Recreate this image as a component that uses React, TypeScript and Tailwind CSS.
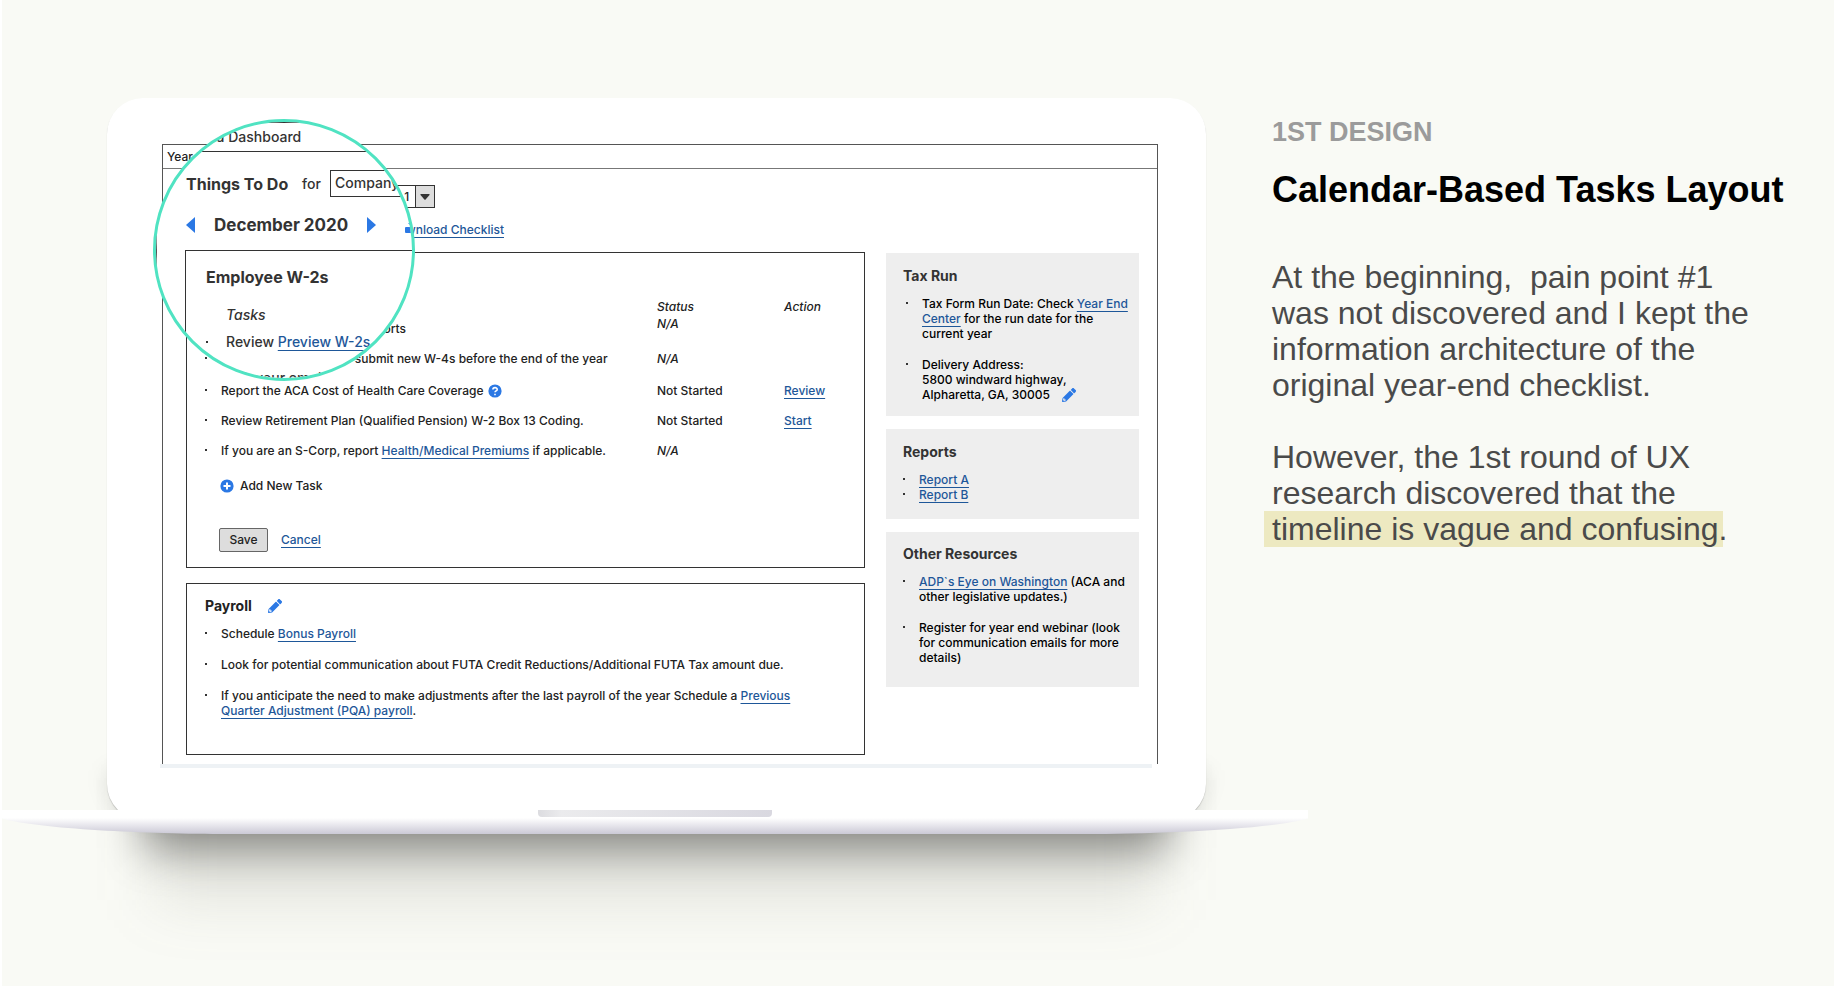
import React from 'react';

const link = 'text-[#1e5799] underline underline-offset-[3px]';

function Bullet() {
  return <span aria-hidden="true" className="mt-[6px] mr-[14px] h-[2px] w-[2px] shrink-0 bg-[#333]" />;
}

function Item({ children }: { children: React.ReactNode }) {
  return (
    <li className="flex">
      <Bullet />
      <div>{children}</div>
    </li>
  );
}

function Pencil() {
  return (
    <svg viewBox="0 0 512 512" className="h-[14px] w-[14px]" fill="#2b78e4" aria-hidden="true">
      <path d="M498 142l-46 46c-5 5-13 5-17 0L324 77c-5-5-5-12 0-17l46-46c19-19 49-19 68 0l60 60c19 19 19 49 0 68zm-214-42L22 362 0 484c-3 16 12 30 28 28l122-22 262-262c5-5 5-13 0-17L301 100c-4-5-12-5-17 0zM88 424h48v36l-65 11-31-31 11-64h37v48z" />
    </svg>
  );
}

function Lens() {
  return (
    <div
      aria-hidden="true"
      className="absolute top-[21px] left-[46px] z-10 h-[262px] w-[262px] overflow-hidden rounded-full border-[3px] border-[#50e3c2] bg-white text-[14px] leading-5 text-[#333]"
    >
      <div className="h-full w-[360px] border-l border-[#555] whitespace-nowrap">
        <div className="flex h-[30px] items-center border-y border-[#333] pl-[8px]">Year End Dashboard</div>
        <div className="mt-[18px] flex h-[27px] items-center pl-[29px]">
          <span className="w-[116px] text-[16px] font-bold">Things To Do</span>
          <span className="w-[28px]">for</span>
          <span className="h-[27px] w-[140px] border border-[#333] pt-[2px] pl-[4px]">Company 1</span>
        </div>
        <div className="mt-[16px] flex h-6 items-center pl-[29px]">
          <svg viewBox="0 0 9 16" className="h-4 w-[9px]" fill="#2b78e4"><path d="M9 0v16L0 8z" /></svg>
          <span className="w-[172px] pl-[19px] text-[17px] font-bold">December 2020</span>
          <svg viewBox="0 0 9 16" className="h-4 w-[9px]" fill="#2b78e4"><path d="M0 0v16l9-8z" /></svg>
          <svg viewBox="0 0 18 18" className="ml-[29px] h-[18px] w-[18px]" fill="#2b78e4">
            <path d="M7 1h4v6h4l-6 6-6-6h4zM1 11h4l4 4 4-4h4q1 0 1 1v4q0 1-1 1H1q-1 0-1-1v-4q0-1 1-1z" />
          </svg>
        </div>
        <div className="mt-[13px] ml-[28px] h-[200px] border-t border-l border-[#333] pt-[14px] pl-[20px]">
          <div className="text-[16px] leading-6 font-bold">Employee W-2s</div>
          <div className="mt-4 pl-5 italic">Tasks</div>
          <div className="mt-[7px] flex items-center">
            <span className="mr-[18px] h-[2px] w-[2px] bg-[#333]" />
            <span>Review <span className={link}>Preview W-2s</span></span>
          </div>
          <div className="mt-4 pl-5">Ask your employees</div>
        </div>
      </div>
    </div>
  );
}

function TaskRow({ task, status, action, className }: { task: React.ReactNode; status: string; action?: string; className: string }) {
  return (
    <tr className={'align-top ' + className}>
      <td>
        <div className="flex">
          <Bullet />
          <div>{task}</div>
        </div>
      </td>
      <td className={status === 'N/A' ? 'italic' : ''}>{status}</td>
      <td>{action && <a href="#" className={link}>{action}</a>}</td>
    </tr>
  );
}

function Wireframe() {
  return (
    <div className="text-[12px] leading-4 text-[#222]">
      <div className="border-x border-t border-[#555]">
        <div className="flex h-6 items-center border-b border-[#777] pl-1">Year End Dashboard</div>
        <div className="flex gap-[21px] pr-[18px] pb-[9px] pl-[23px]">
          <div className="min-w-0 flex-1">
            <div className="mt-4 flex h-[23px] items-center">
              <h2 className="w-[110px] text-[14px] font-bold">Things To Do</h2>
              <label htmlFor="company" className="w-[45px]">for</label>
              <div className="relative">
                <select id="company" className="h-[23px] w-[94px] appearance-none border border-[#333] bg-white pl-1">
                  <option>Company 1</option>
                </select>
                <span className="pointer-events-none absolute inset-y-0 right-0 flex w-5 items-center justify-center border border-[#333] bg-[#ddd]">
                  <svg viewBox="0 0 10 6" className="h-[6px] w-[10px]" fill="#333"><path d="M1 0h8q1 0 .5 1L5.600 5.400q-.6.6-1.200 0L.5 1Q0 0 1 0z" /></svg>
                </span>
              </div>
            </div>
            <div className="mt-[14px] flex h-4 items-center">
              <h3 className="w-[204px] pl-6 text-[14px] font-bold">December 2020</h3>
              <a href="#" className={link}>Download Checklist</a>
            </div>

            <section className="mt-[14px] h-[316px] border border-[#333] pt-[16px] pl-[18px]">
              <h3 className="h-[30px] text-[14px] font-bold">Employee W-2s</h3>
              <table className="w-full table-fixed text-left">
                <thead>
                  <tr className="h-[17px] align-top italic">
                    <th className="w-[452px] pl-4 font-medium">Tasks</th>
                    <th className="w-[127px] font-medium">Status</th>
                    <th className="font-medium">Action</th>
                  </tr>
                </thead>
                <tbody>
                  <TaskRow className="h-[35px]" status="N/A" task={<div className="pt-[5px]">Review <a href="#" className={link}>Preview W-2s</a> in Reports</div>} />
                  <TaskRow className="h-8" status="N/A" task="Ask your employees to submit new W-4s before the end of the year" />
                  <TaskRow
                    className="h-[30px]"
                    status="Not Started"
                    action="Review"
                    task={
                      <span className="flex items-center gap-[5px]">
                        Report the ACA Cost of Health Care Coverage
                        <svg viewBox="0 0 14 14" className="h-[14px] w-[14px]" aria-hidden="true">
                          <circle cx="7" cy="7" r="6.6" fill="#2b78e4" />
                          <path d="M4.900 5.400C4.900 3 9.200 3 9.200 5.400 9.200 6.900 7 6.900 7 8.300M7 9.800v1.500" fill="none" stroke="#fff" strokeWidth="1.600" />
                        </svg>
                      </span>
                    }
                  />
                  <TaskRow className="h-[30px]" status="Not Started" action="Start" task="Review Retirement Plan (Qualified Pension) W-2 Box 13 Coding." />
                  <TaskRow className="h-[30px]" status="N/A" task={<>If you are an S-Corp, report <a href="#" className={link}>Health/Medical Premiums</a> if applicable.</>} />
                </tbody>
              </table>
              <button type="button" className="mt-[5px] ml-[15px] flex items-center gap-[6px]">
                <svg viewBox="0 0 14 14" className="h-[14px] w-[14px]" aria-hidden="true">
                  <circle cx="7" cy="7" r="6.6" fill="#2b78e4" />
                  <path d="M7 3.500v7M3.500 7h7" stroke="#fff" strokeWidth="2" />
                </svg>
                Add New Task
              </button>
              <div className="mt-[34px] ml-[14px] flex items-center gap-[13px]">
                <button type="button" className="h-6 w-[49px] rounded-[2px] border border-[#666] bg-[#ddd]">Save</button>
                <a href="#" className={link}>Cancel</a>
              </div>
            </section>

            <section className="mt-[15px] h-[172px] border border-[#333] pt-[12px] pl-[18px] leading-[15px]">
              <div className="flex h-5 items-center gap-4">
                <h3 className="text-[14px] leading-5 font-bold">Payroll</h3>
                <button type="button" aria-label="Edit payroll"><Pencil /></button>
              </div>
              <ul className="mt-[10px] flex flex-col gap-4">
                <Item>Schedule <a href="#" className={link}>Bonus Payroll</a></Item>
                <Item>Look for potential communication about FUTA Credit Reductions/Additional FUTA Tax amount due.</Item>
                <Item>
                  If you anticipate the need to make adjustments after the last payroll of the year Schedule a{' '}
                  <a href="#" className={link}>Previous<br />Quarter Adjustment (PQA) payroll</a>.
                </Item>
              </ul>
            </section>
          </div>

          <aside className="flex w-[253px] shrink-0 flex-col gap-[13px] pt-[84px] leading-[15px] text-black">
            <section className="bg-[#eee] px-[17px] pt-[13px] pb-[14px]">
              <h3 className="text-[14px] leading-5 font-bold text-[#333]">Tax Run</h3>
              <ul className="mt-[10px] -mr-4 flex flex-col gap-4 pl-[3px]">
                <Item>Tax Form Run Date: Check <a href="#" className={link}>Year End<br />Center</a> for the run date for the<br />current year</Item>
                <Item>
                  Delivery Address:<br />5800 windward highway,<br />
                  <span className="flex items-center gap-3">
                    Alpharetta, GA, 30005
                    <button type="button" aria-label="Edit address"><Pencil /></button>
                  </span>
                </Item>
              </ul>
            </section>
            <section className="bg-[#eee] px-[17px] pt-[13px] pb-[17px]">
              <h3 className="text-[14px] leading-5 font-bold text-[#333]">Reports</h3>
              <ul className="mt-[10px]">
                <Item><a href="#" className={link}>Report A</a></Item>
                <Item><a href="#" className={link}>Report B</a></Item>
              </ul>
            </section>
            <section className="bg-[#eee] px-[17px] pt-[12px] pb-[22px]">
              <h3 className="text-[14px] leading-5 font-bold text-[#333]">Other Resources</h3>
              <ul className="mt-[10px] -mr-4 flex flex-col gap-4">
                <Item><a href="#" className={link}>ADP`s Eye on Washington</a> (ACA and<br />other legislative updates.)</Item>
                <Item>Register for year end webinar (look<br />for communication emails for more<br />details)</Item>
              </ul>
            </section>
          </aside>
        </div>
      </div>
      <div className="mr-[6px] -ml-[2px] h-1 bg-[#eef2f5]" />
    </div>
  );
}

function Base() {
  return (
    <div className="relative z-10 -mt-[10px] -mr-9">
      <svg viewBox="0 0 1306 24" preserveAspectRatio="none" className="block h-6 w-full" aria-hidden="true">
        <defs>
          <linearGradient id="rim" x1="0" y1="0" x2="0" y2="1">
            <stop offset="0.33" stopColor="#fff" />
            <stop offset="1" stopColor="#cbc9d6" />
          </linearGradient>
        </defs>
        <path d="M0 0H1306V8.500C1270 19 1160 24 1080 24H226C146 24 36 19 0 8.500z" fill="url(#rim)" />
      </svg>
      <div className="absolute inset-x-0 top-0 mx-auto h-[7px] w-[234px] rounded-b-[4px] bg-linear-to-r from-[#dcdce0] via-[#ebebed] via-10% to-[#d9d8e0]" />
    </div>
  );
}

export default function App() {
  return (
    <main className="flex min-h-screen overflow-hidden border-l-2 border-white bg-[#f9faf5] font-['Inter',sans-serif] font-medium">
      <div className="min-w-0 flex-1 pt-[98px]">
        <div className="relative mr-[66px] ml-[105px]">
          <div className="absolute inset-x-[38px] -bottom-[28px] h-[70px] bg-black/45 blur-[22px]" />
          <div className="absolute inset-x-[50px] -bottom-[80px] h-[120px] bg-[#62645a]/15 blur-[30px]" />
          <div className="absolute inset-x-0 bottom-0 h-[50px] rounded-b-[40px] bg-black/10 blur-[10px]" />
          <div className="relative rounded-[36px] bg-white pt-[46px] pr-[48px] pb-[52px] pl-[55px] shadow-[0_1px_1px_rgba(0,0,0,0.2)]">
            <Wireframe />
            <Lens />
          </div>
        </div>
        <Base />
      </div>

      <article className="w-[562px] shrink-0 pt-[116px] font-['Liberation_Sans',Arial,sans-serif] font-normal">
        <p className="text-[27px] leading-8 font-bold text-[#9b9b9b]">1ST DESIGN</p>
        <h1 className="mt-[22px] text-[36px] leading-10 font-bold text-black">Calendar-Based Tasks Layout</h1>
        <div className="mt-[49px] text-[32px] leading-9 text-[#4a4a4a]">
          <p>
            At the beginning,&nbsp; pain point #1<br />was not discovered and I kept the<br />information architecture of the<br />original year-end checklist.
          </p>
          <p className="mt-9">
            However, the 1st round of UX<br />research discovered that the<br />
            <mark className="-ml-2 bg-[#ede9c1] pr-1 pl-2 text-[#4a4a4a]">timeline is vague and confusing</mark><span className="-ml-1">.</span>
          </p>
        </div>
      </article>
    </main>
  );
}
